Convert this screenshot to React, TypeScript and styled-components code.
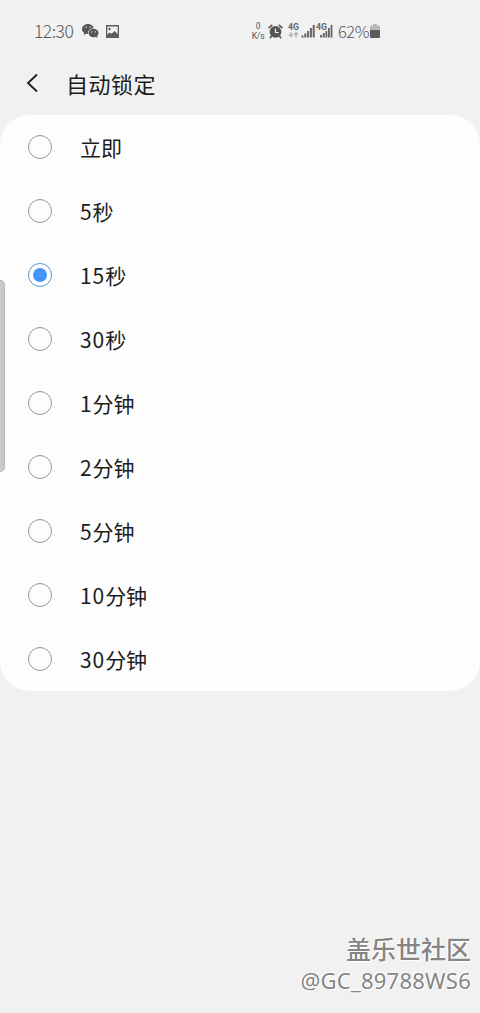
import React from 'react';
import styled, { createGlobalStyle } from 'styled-components';

const GlobalStyle = createGlobalStyle`
  * { box-sizing: border-box; }
  body { margin: 0; background: #f1f1f1; }
`;

const Screen = styled.main`
  position: relative;
  display: flex;
  flex-direction: column;
  width: 480px;
  height: 1013px;
  overflow: hidden;
  background: #f1f1f1;
  color: #1c1c1c;
  font-family: 'Noto Sans CJK SC', sans-serif;
`;

const StatusBar = styled.div`
  display: flex;
  justify-content: space-between;
  align-items: center;
  height: 62px;
  padding: 0 100px 0 34px;
  color: #585858;
`;

const StatusGroup = styled.div`
  display: flex;
  align-items: center;
  svg { flex: none; }
`;

const StatusText = styled.span<{ $width: number; $tight?: boolean }>`
  width: ${(p) => p.$width}px;
  padding-bottom: 1px;
  font-size: ${(p) => (p.$tight ? 16.5 : 17.5)}px;
  font-weight: 300;
  line-height: 24px;
  letter-spacing: -0.5px;
  white-space: nowrap;
`;

const Speed = styled.div`
  display: flex;
  flex-direction: column;
  align-items: center;
  width: 12px;
  font: 8.5px/10px Roboto, sans-serif;
  letter-spacing: -0.2px;
`;

const Header = styled.header`
  display: flex;
  align-items: center;
  height: 53px;
  padding: 0 0 11px 25px;
`;

const Title = styled.h1`
  margin: 0 0 0 26px;
  font-size: 22px;
  font-weight: 400;
  line-height: 32px;
  letter-spacing: 0.5px;
`;

const Card = styled.ul`
  margin: 0;
  padding: 0;
  list-style: none;
  border-radius: 30px;
  background: #fdfdfd;
`;

const Row = styled.li`
  display: flex;
  align-items: center;
  height: 64px;
  padding-left: 27.5px;
`;

const Radio = styled.span<{ $on: boolean }>`
  display: grid;
  place-items: center;
  width: 24px;
  height: 24px;
  border: 1px solid ${(p) => (p.$on ? '#5297d8' : '#989898')};
  border-radius: 50%;
  &::after {
    content: '';
    width: 14px;
    height: 14px;
    border-radius: 50%;
    background: ${(p) => (p.$on ? '#4396fa' : 'transparent')};
  }
`;

const Label = styled.span`
  margin-left: 28.5px;
  padding-bottom: 1px;
  font-size: 21px;
  line-height: 30px;
`;

const Digits = styled.span`
  letter-spacing: 0.9px;
`;

const EdgeHandle = styled.div`
  position: absolute;
  left: 0;
  top: 280px;
  width: 5px;
  height: 192px;
  border: 1px solid #b7b4b1;
  border-left: 0;
  border-radius: 0 5px 5px 0;
  background: #cbc8c5;
`;

const Watermark = styled.footer`
  display: flex;
  flex-direction: column;
  align-items: flex-end;
  margin-top: auto;
  padding: 0 9px 17px 0;
  color: #858585;
  text-shadow: -1px -1px 1px #fff, 1px 1px 1px #fff;
`;

const Community = styled.span`
  font-size: 25px;
  font-weight: 500;
  line-height: 32px;
`;

const Author = styled.span`
  font: 22px/32px 'Noto Sans', sans-serif;
  letter-spacing: 0.25px;
`;

const options = [
  ['', '立即'],
  ['5', '秒'],
  ['15', '秒'],
  ['30', '秒'],
  ['1', '分钟'],
  ['2', '分钟'],
  ['5', '分钟'],
  ['10', '分钟'],
  ['30', '分钟'],
];

const WeChat = () => (
  <svg width="17" height="14" viewBox="0 0 17 14">
    <path d="M6 0C2.7 0 0 2.2 0 5c0 1.6.8 2.9 2.1 3.8L1.6 11l2.3-1.3c.7.2 1.3.2 2 .2C5.600 6.500 8 4.200 11.700 4.200 11.200 1.800 8.800 0 6 0z" fill="#555" />
    <ellipse cx="11.500" cy="9" rx="5" ry="4.200" fill="#555" />
    <path d="M13 12l2.500 2-.4-3z" fill="#555" />
    <path d="M3.500 3.200h1.200M7.500 3.200h1.200M9.300 7.800h1M12.700 7.800h1" stroke="#f1f1f1" strokeWidth="1.200" />
  </svg>
);

const Picture = () => (
  <svg width="13" height="15" viewBox="0 0 13 15">
    <path fillRule="evenodd" fill="#5c5c5c" d="M0 1h13v13H0zM1.300 2.500v8L3.700 8.500l2 1.300L8.500 7l3.200 3V2.500z" />
    <circle cx="3.500" cy="5" r="1.200" fill="#5c5c5c" />
  </svg>
);

const Alarm = () => (
  <svg width="15" height="15" viewBox="0 0 15 15">
    <circle cx="7.500" cy="7.800" r="5.900" fill="#555" />
    <path d="M.6 4.200L4.200.8M14.400 4.200L10.800.8M3.500 12L2 14.300M11.500 12l1.500 2.300" stroke="#555" strokeWidth="1.600" />
    <path d="M7.500 4.500v4h3.200" fill="none" stroke="#f1f1f1" strokeWidth="1.200" />
  </svg>
);

const Signals = () => (
  <svg width="46" height="18" viewBox="0 0 46 18" fontFamily="Roboto, sans-serif" fontSize="8.700" fontWeight="700" fill="#666">
    <text x="0" y="8">4G</text>
    <path d="M3 10v5M1 12.500l2 2 2-2M8 15.500v-5M6 12.500l2-2 2 2" stroke="#b5b5b5" strokeWidth="1.500" fill="none" />
    <path d="M13.500 13.500h2v2h-2zM16.300 11.500h2v4h-2zM19.100 9h2v6.500h-2zM21.900 6h2v9.500h-2zM24.700 3h2v12.500h-2z" />
    <path d="M32 13h2v2.500h-2zM34.800 11h2v4.500h-2zM37.500 9h1.800v6.500h-1.800zM40 6h1.800v9.500H40zM42.600 3h1.800v12.500h-1.800z" />
    <text x="28" y="8" stroke="#f1f1f1" strokeWidth="1.200" paintOrder="stroke">4G</text>
  </svg>
);

const Battery = () => (
  <svg width="10" height="15" viewBox="0 0 10 15">
    <path d="M3 0h4v1.500h2q1 0 1 1V7H0V2.500q0-1 1-1h2z" fill="#b9b9b9" />
    <path d="M0 6h10v7q0 1-1 1H1q-1 0-1-1z" fill="#5a5a5a" />
  </svg>
);

const Back = () => (
  <svg width="15" height="20" viewBox="0 0 15 20">
    <path d="M12 1.500L3 10l9 8.500" fill="none" stroke="#202020" strokeWidth="1.900" />
  </svg>
);

const IconGap = styled.span<{ $w: number }>`
  flex: none;
  width: ${(p) => p.$w}px;
`;

export default function App() {
  return (
    <Screen>
      <GlobalStyle />
      <StatusBar>
        <StatusGroup>
          <StatusText $width={48}>12:30</StatusText>
          <WeChat />
          <IconGap $w={7} />
          <Picture />
        </StatusGroup>
        <StatusGroup>
          <Speed><span>0</span><span>K/s</span></Speed>
          <IconGap $w={4} />
          <Alarm />
          <IconGap $w={5} />
          <Signals />
          <IconGap $w={4} />
          <StatusText $width={32} $tight>62%</StatusText>
          <Battery />
        </StatusGroup>
      </StatusBar>
      <Header>
        <Back />
        <Title>自动锁定</Title>
      </Header>
      <Card>
        {options.map(([n, unit]) => (
          <Row key={n + unit}>
            <Radio $on={n === '15'} />
            <Label>{n && <Digits>{n}</Digits>}{unit}</Label>
          </Row>
        ))}
      </Card>
      <Watermark>
        <Community>盖乐世社区</Community>
        <Author>@GC_89788WS6</Author>
      </Watermark>
      <EdgeHandle />
    </Screen>
  );
}
